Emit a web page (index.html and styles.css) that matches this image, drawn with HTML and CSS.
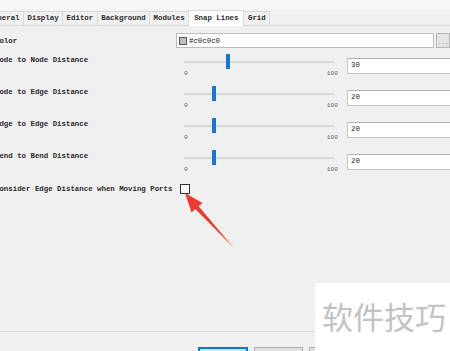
FILE: index.html
```html
<!DOCTYPE html>
<html lang="en">
<head>
  <meta charset="UTF-8" />
  <title>Preferences - Snap Lines</title>
  <link rel="stylesheet" href="styles.css">
</head>
<body>

<div class="window">
  <!-- Tab strip -->
  <div class="tabs">
    <div class="tab">General</div>
    <div class="tab">Display</div>
    <div class="tab">Editor</div>
    <div class="tab">Background</div>
    <div class="tab">Modules</div>
    <div class="tab active">Snap Lines</div>
    <div class="tab">Grid</div>
  </div>

  <!-- Snap Lines settings -->
  <div class="panel">
    <div class="color-row">
      <span class="label">Color</span>
      <div class="color-field"><span class="swatch"></span>#c0c0c0</div>
      <button class="more">...</button>
    </div>

    <div class="slider-row">
      <span class="label">Node to Node Distance</span>
      <div class="slider">
        <div class="track"></div>
        <div class="thumb" style="left: 49.4px"></div>
        <div class="ticks"><span>0</span><span>100</span></div>
      </div>
      <div class="field">30</div>
    </div>

    <div class="slider-row">
      <span class="label">Node to Edge Distance</span>
      <div class="slider">
        <div class="track"></div>
        <div class="thumb" style="left: 34.6px"></div>
        <div class="ticks"><span>0</span><span>100</span></div>
      </div>
      <div class="field">20</div>
    </div>

    <div class="slider-row">
      <span class="label">Edge to Edge Distance</span>
      <div class="slider">
        <div class="track"></div>
        <div class="thumb" style="left: 34.6px"></div>
        <div class="ticks"><span>0</span><span>100</span></div>
      </div>
      <div class="field">20</div>
    </div>

    <div class="slider-row">
      <span class="label">Bend to Bend Distance</span>
      <div class="slider">
        <div class="track"></div>
        <div class="thumb" style="left: 34.6px"></div>
        <div class="ticks"><span>0</span><span>100</span></div>
      </div>
      <div class="field">20</div>
    </div>

    <div class="check-row">
      <span class="label">Consider Edge Distance when Moving Ports</span>
      <span class="checkbox"></span>
    </div>
  </div>

  <!-- Dialog buttons -->
  <div class="footer">
    <button class="btn primary">Ok</button>
    <button class="btn">Cancel</button>
    <button class="btn">Apply</button>
  </div>

  <!-- Annotation arrow -->
  <svg class="arrow" width="450" height="351" viewBox="0 0 450 351">
    <polygon points="185,193 202.5,203 198.6,206.3 233.5,247.5 195.2,208.9 191.5,212.5" fill="#ee3b30"/>
  </svg>

  <div class="watermark">软件技巧</div>
</div>

</body>
</html>
```

FILE: styles.css
```css
body {
  margin: 0;
  background: #f0f0f0;
  font-family: "Liberation Mono", monospace;
  font-size: 7.4px;
  font-weight: bold;
  color: #2a2a2a;
}

.window {
  position: relative;
  width: 450px;
  height: 351px;
  display: flex;
  flex-direction: column;
  overflow: hidden;
}

/* Tabs */
.tabs {
  display: flex;
  align-items: flex-end;
  height: 25px;
  margin-left: -16px;
  border-bottom: 1px solid #d9d9d9;
  background: linear-gradient(#f6f6f6 0, #f6f6f6 10px, #f0f0f0 10px);
}

.tab {
  height: 13px;
  line-height: 13px;
  padding: 0 3.5px;
  border: 1px solid #d9d9d9;
  border-bottom: none;
  border-right: none;
  background: #f0f0f0;
}

.tab:last-child {
  border-right: 1px solid #d9d9d9;
}

.tab.active {
  height: 15px;
  line-height: 14px;
  margin-bottom: -1px;
  padding: 0 5px;
  background: #fff;
  border-right: 1px solid #d9d9d9;
}

.tab.active + .tab {
  border-left: none;
}

/* Panel */
.panel {
  margin-left: -5px;
  padding-top: 7px;
}

.label {
  white-space: nowrap;
  line-height: 16px;
}

.color-row {
  display: flex;
  align-items: center;
  height: 15px;
  margin-bottom: 4px;
}

.color-row .label {
  width: 183px;
}

.color-field {
  display: flex;
  align-items: center;
  width: 261px;
  height: 15px;
  box-sizing: border-box;
  border: 1px solid #bcbcbc;
  background: #fff;
  padding-left: 2px;
  font-weight: normal;
  color: #222;
}

.swatch {
  width: 6px;
  height: 6px;
  margin-right: 2px;
  border: 1px solid #555;
  background: #c0c0c0;
}

.more {
  width: 14px;
  height: 15px;
  margin-left: 2px;
  padding: 0;
  border: 1px solid #b5b5b5;
  background: #e4e4e4;
  font-family: inherit;
  font-size: 6px;
  color: #666;
  line-height: 18px;
}

.slider-row {
  display: grid;
  grid-template-columns: 182px 170px 110px;
  height: 32px;
}

.slider {
  position: relative;
  padding: 0 9px 0 7px;
}

.track {
  width: 150px;
  height: 2px;
  margin-top: 9px;
  background: #d8d8d8;
}

.thumb {
  position: absolute;
  top: 2px;
  width: 4px;
  height: 15px;
  background: #1a75cc;
}

.ticks {
  display: flex;
  justify-content: space-between;
  margin-top: 7px;
  font-size: 6.2px;
  font-weight: normal;
  line-height: 8px;
  color: #666;
}

.field {
  margin-top: 6px;
  height: 16px;
  box-sizing: border-box;
  border: 1px solid #c4c4c4;
  border-top-color: #b0b0b0;
  background: #fff;
  padding-left: 3px;
  line-height: 13px;
  font-weight: normal;
  color: #222;
}

.check-row {
  display: flex;
  align-items: center;
  height: 14px;
  padding-top: 2px;
}

.checkbox {
  width: 10px;
  height: 10px;
  box-sizing: border-box;
  margin-left: 8px;
  border: 1px solid #333;
  background: #fff;
}

/* Footer */
.footer {
  margin-top: auto;
  height: 20px;
  box-sizing: border-box;
  border-top: 1px solid #dcdcdc;
  padding: 15px 0 0 198px;
  display: flex;
  gap: 6px;
  overflow: hidden;
}

.btn {
  flex: none;
  width: 49px;
  height: 22px;
  border: 1px solid #adadad;
  background: #e1e1e1;
  font-family: inherit;
  font-size: 7.4px;
  color: #111;
  padding: 0;
}

.btn.primary {
  width: 50px;
  border: 2px solid #0078d7;
}

/* Overlays */
.arrow {
  position: absolute;
  left: 0;
  top: 0;
  pointer-events: none;
}

.watermark {
  position: absolute;
  left: 315px;
  top: 283px;
  width: 135px;
  height: 68px;
  box-sizing: border-box;
  padding: 17px 0 0 7px;
  background: #fff;
  font-family: "Noto Sans CJK SC", sans-serif;
  font-size: 31px;
  font-weight: normal;
  line-height: 31px;
  color: #c2c2c2;
}
```
